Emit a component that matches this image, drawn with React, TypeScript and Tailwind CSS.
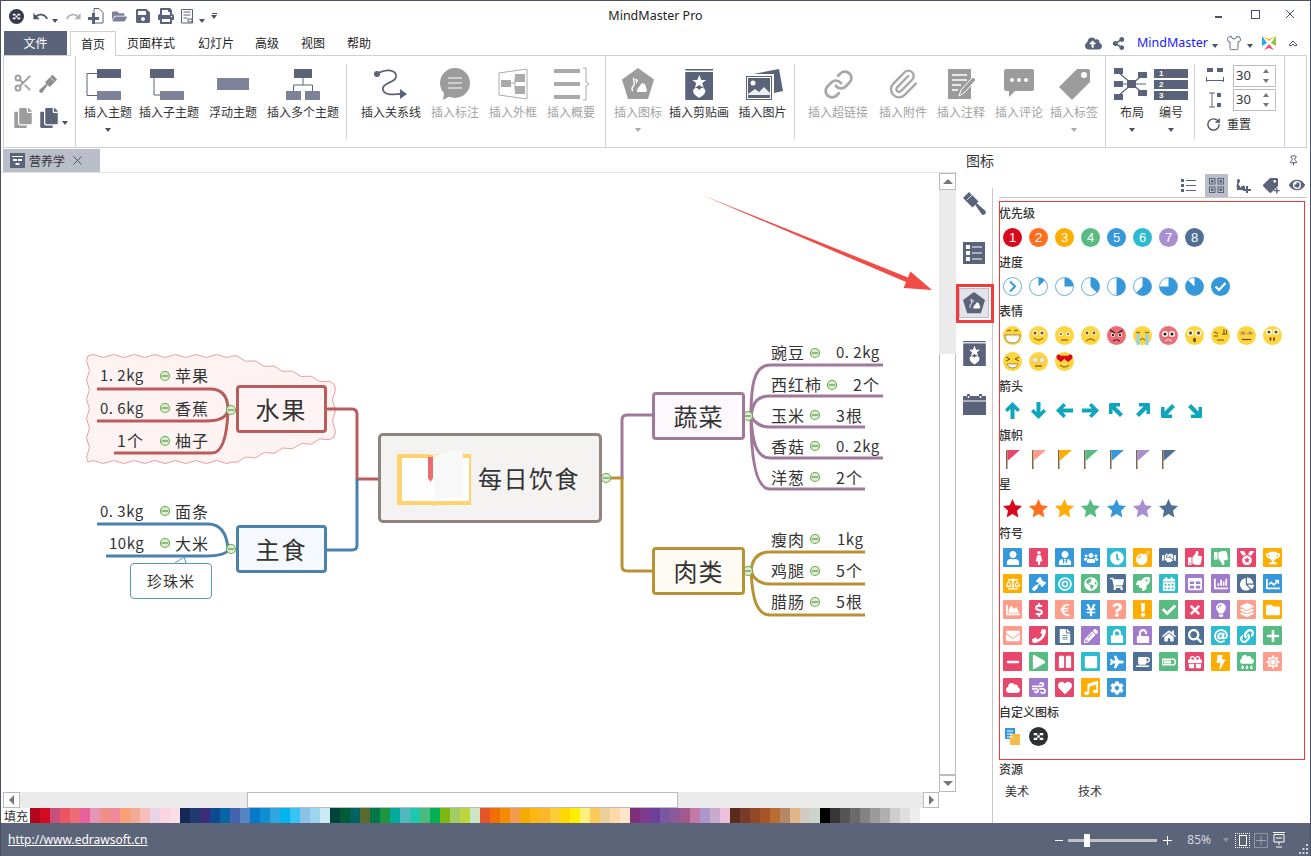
import type { ReactNode } from "react";
import { Link, Paperclip, Shirt, RotateCw, Pin, Scissors } from "lucide-react";
import { MdUndo, MdRedo } from "react-icons/md";
import {
  FaUser, FaFemale, FaUserTie, FaUsers, FaClock, FaBomb, FaHandshake, FaThumbsUp, FaThumbsDown, FaMedal, FaTrophy,
  FaBalanceScale, FaGavel, FaBullseye, FaGlobeAmericas, FaShoppingCart, FaRocket, FaCalendarAlt, FaTable, FaChartBar, FaChartPie, FaChartLine,
  FaChartArea, FaDollarSign, FaEuroSign, FaYenSign, FaQuestion, FaExclamation, FaCheck, FaTimes, FaLightbulb, FaLayerGroup, FaFolder,
  FaEnvelope, FaPhone, FaFileAlt, FaPencilAlt, FaLock, FaUnlock, FaHome, FaSearch, FaAt, FaLink, FaPlus,
  FaMinus, FaPlay, FaPause, FaStop, FaPlane, FaCoffee, FaBatteryThreeQuarters, FaGift, FaBolt, FaCloudRain, FaSun,
  FaCloud, FaWind, FaHeart, FaMusic, FaCog, FaCopy, FaSave, FaPrint, FaFolderOpen,
  FaCloudUploadAlt, FaShareAlt, FaEye, FaTag,
} from "react-icons/fa";

const DARK = "#5b637a";
const GRAY = "#9c9c9c";

const BLUE = "bg-[#3498db]", RED = "bg-[#e8466a]", TEAL = "bg-[#2cbbcf]", ORANGE = "bg-[#ffad00]";
const NAVY = "bg-[#4f7094]", GREEN = "bg-[#58bc82]", PURPLE = "bg-[#a07bcd]", SALMON = "bg-[#ff9d8a]";

const SYMBOLS: [any, string][] = [
  [FaUser, BLUE], [FaFemale, RED], [FaUserTie, BLUE], [FaUsers, BLUE], [FaClock, TEAL], [FaBomb, ORANGE], [FaHandshake, NAVY], [FaThumbsUp, RED], [FaThumbsDown, GREEN], [FaMedal, RED], [FaTrophy, ORANGE],
  [FaBalanceScale, ORANGE], [FaGavel, BLUE], [FaBullseye, TEAL], [FaGlobeAmericas, GREEN], [FaShoppingCart, NAVY], [FaRocket, GREEN], [FaCalendarAlt, TEAL], [FaTable, PURPLE], [FaChartBar, PURPLE], [FaChartPie, NAVY], [FaChartLine, BLUE],
  [FaChartArea, SALMON], [FaDollarSign, RED], [FaEuroSign, SALMON], [FaYenSign, BLUE], [FaQuestion, SALMON], [FaExclamation, ORANGE], [FaCheck, GREEN], [FaTimes, RED], [FaLightbulb, PURPLE], [FaLayerGroup, SALMON], [FaFolder, ORANGE],
  [FaEnvelope, SALMON], [FaPhone, RED], [FaFileAlt, NAVY], [FaPencilAlt, PURPLE], [FaLock, TEAL], [FaUnlock, PURPLE], [FaHome, NAVY], [FaSearch, NAVY], [FaAt, TEAL], [FaLink, TEAL], [FaPlus, GREEN],
  [FaMinus, RED], [FaPlay, GREEN], [FaPause, RED], [FaStop, TEAL], [FaPlane, BLUE], [FaCoffee, NAVY], [FaBatteryThreeQuarters, GREEN], [FaGift, RED], [FaBolt, ORANGE], [FaCloudRain, GREEN], [FaSun, SALMON],
  [FaCloud, RED], [FaWind, PURPLE], [FaHeart, RED], [FaMusic, ORANGE], [FaCog, BLUE],
];

const SWATCHES = [
  "bg-[#b0071a]", "bg-[#d40a20]", "bg-[#c6507a]", "bg-[#ea5565]", "bg-[#ee6c73]", "bg-[#e8619d]", "bg-[#e496b6]", "bg-[#f08f88]", "bg-[#f08a9a]", "bg-[#fb9f76]", "bg-[#f0ab95]", "bg-[#f7bdb8]", "bg-[#e8d4e6]", "bg-[#fbd3e3]", "bg-[#f9dfe5]",
  "bg-[#142858]", "bg-[#213a70]", "bg-[#3d2c7a]", "bg-[#0d4a8f]", "bg-[#0565a6]", "bg-[#4464ae]", "bg-[#5684c2]", "bg-[#0579cc]", "bg-[#0d8fd0]", "bg-[#2ea7e0]", "bg-[#00b4ef]", "bg-[#36c5f2]", "bg-[#8bc2e8]", "bg-[#9dd6ec]", "bg-[#cbe9f2]",
  "bg-[#00433a]", "bg-[#005c37]", "bg-[#00635f]", "bg-[#596a2e]", "bg-[#007749]", "bg-[#1e9540]", "bg-[#00ab9b]", "bg-[#50b9bd]", "bg-[#1ec8ae]", "bg-[#4bbb7d]", "bg-[#00b156]", "bg-[#7eb912]", "bg-[#a3cc62]", "bg-[#bdd63c]", "bg-[#cde5c6]",
  "bg-[#e4532a]", "bg-[#f06d00]", "bg-[#f58c00]", "bg-[#f49a4c]", "bg-[#f6ab00]", "bg-[#fdb714]", "bg-[#fdb62f]", "bg-[#fdcb33]", "bg-[#ffd800]", "bg-[#ffee00]", "bg-[#fdf07c]", "bg-[#fcc95b]", "bg-[#ecd09c]", "bg-[#fcd9a7]", "bg-[#fbe6c9]",
  "bg-[#7d2f7a]", "bg-[#7e3a8b]", "bg-[#6d3f98]", "bg-[#7b579f]", "bg-[#8a5a9d]", "bg-[#a25a8c]", "bg-[#c378a8]", "bg-[#ab97cc]", "bg-[#c9a9cc]", "bg-[#eac0dc]",
  "bg-[#5a2a1c]", "bg-[#7a3a2a]", "bg-[#924a26]", "bg-[#a85427]", "bg-[#b96d33]", "bg-[#b58668]", "bg-[#e0b788]", "bg-[#d2cbc4]", "bg-[#cbd5c9]",
  "bg-[#000000]", "bg-[#373737]", "bg-[#555555]", "bg-[#6a6a6a]", "bg-[#838383]", "bg-[#9b9b9b]", "bg-[#b0b0b0]", "bg-[#cdcdcd]", "bg-[#dedede]", "bg-[#ededed]",
];

const PRIORITY = ["#d9071e", "#ff6d1f", "#ffad00", "#58bc82", "#3498db", "#2cbbcf", "#a78fd0", "#4f7094"];
const MARK = ["#e8466a", "#ff9d8a", "#ffad00", "#58bc82", "#3498db", "#a78fd0", "#4f7094"];
const STAR = ["#d9071e", "#ff6d1f", "#ffad00", "#58bc82", "#3498db", "#a78fd0", "#4f7094"];

// leaves of the map, page coordinates
const LEAVES: [string, string][] = [
  ["left-[100px] top-[363px]", "1. 2kg"], ["left-[175px] top-[363px]", "苹果"],
  ["left-[100px] top-[396px]", "0. 6kg"], ["left-[175px] top-[396px]", "香蕉"],
  ["left-[117px] top-[428px]", "1个"], ["left-[175px] top-[428px]", "柚子"],
  ["left-[100px] top-[499px]", "0. 3kg"], ["left-[175px] top-[499px]", "面条"],
  ["left-[109px] top-[531px]", "10kg"], ["left-[175px] top-[531px]", "大米"],
  ["left-[771px] top-[340px]", "豌豆"], ["left-[836px] top-[340px]", "0. 2kg"],
  ["left-[771px] top-[372px]", "西红柿"], ["left-[853px] top-[372px]", "2个"],
  ["left-[771px] top-[403px]", "玉米"], ["left-[836px] top-[403px]", "3根"],
  ["left-[771px] top-[434px]", "香菇"], ["left-[836px] top-[434px]", "0. 2kg"],
  ["left-[771px] top-[465px]", "洋葱"], ["left-[836px] top-[465px]", "2个"],
  ["left-[771px] top-[527px]", "瘦肉"], ["left-[837px] top-[527px]", "1kg"],
  ["left-[771px] top-[558px]", "鸡腿"], ["left-[836px] top-[558px]", "5个"],
  ["left-[771px] top-[589px]", "腊肠"], ["left-[836px] top-[589px]", "5根"],
];

const DOTS: [number, number, number][] = [
  [165, 376, 4.5], [165, 408, 4.5], [165, 441, 4.5], [165, 511, 4.5], [165, 543, 4.5],
  [815, 353, 4.5], [832, 385, 4.5], [815, 415, 4.5], [815, 446, 4.5], [815, 477, 4.5],
  [815, 539, 4.5], [815, 571, 4.5], [815, 602, 4.5],
  [231, 410, 4.5], [231, 549, 4.5], [606, 478, 4.5], [748, 416, 4.5], [748, 571, 4.5],
];

function wavy(points: [number, number][]) {
  let d = "";
  points.forEach((p, i) => {
    const q = points[(i + 1) % points.length];
    const len = Math.hypot(q[0] - p[0], q[1] - p[1]);
    const n = Math.max(1, Math.round(len / 10));
    const nx = -(q[1] - p[1]) / len, ny = (q[0] - p[0]) / len;
    if (i === 0) d += `M${p[0]} ${p[1]}`;
    for (let k = 0; k < n; k++) {
      const ax = p[0] + ((q[0] - p[0]) * (k + 1)) / n, ay = p[1] + ((q[1] - p[1]) * (k + 1)) / n;
      const mx = p[0] + ((q[0] - p[0]) * (k + 0.5)) / n, my = p[1] + ((q[1] - p[1]) * (k + 0.5)) / n;
      const s = k % 2 ? 3 : -3;
      d += ` Q${mx + nx * s} ${my + ny * s} ${ax} ${ay}`;
    }
  });
  return d + " Z";
}

function Caret({ gray }: { gray?: boolean }) {
  return <span className={`inline-block w-0 h-0 border-x-[3px] border-x-transparent border-t-[4px] ${gray ? "border-t-[#a8a8a8]" : "border-t-[#4a5065]"}`} />;
}

function Pentagon({ color, size }: { color: string; size: number }) {
  return (
    <svg width={size} height={size} viewBox="0 0 32 32">
      <polygon points="16,0 32,11.5 26,31 6,31 0,11.5" fill={color} />
      <path d="M12 10c-2 2 2 4 0 7s-3 4-1 6M13 12c2-1 3 1 1 3" stroke="#fff" strokeWidth="1.4" fill="none" />
      <path d="M15 24c0-5 3-5 4-8 3-2 5 1 5 4 2 2 1 4-1 4z" fill="#fff" />
    </svg>
  );
}

function BookIcon({ size, color }: { size: number; color: string }) {
  return (
    <svg width={size * 0.92} height={size} viewBox="0 0 28 31">
      <rect x="0" y="0" width="28" height="1.5" fill={color} />
      <rect x="0" y="3" width="28" height="28" fill={color} />
      <polygon points="14,6 16,11 21,11 17,14 18.5,19 14,16 9.5,19 11,14 7,11 12,11" fill="#fff" />
      <path d="M14 29c-3-2-6-4-6-6.5a3 3 0 0 1 6-1 3 3 0 0 1 6 1c0 2.500-3 4.500-6 6.500z" fill="#fff" />
    </svg>
  );
}

// flat-headed brush, head top-left, handle bottom-right
function Brush({ size, color, flip }: { size: number; color: string; flip?: boolean }) {
  return (
    <svg className={flip ? "-scale-x-100" : ""} width={size} height={size} viewBox="0 0 24 24">
      <path d="M1 7L7 1l9.500 9.500-6 6z" fill={color} />
      <path d="M5 9l5-5M12 16l5-5" stroke="#fff" strokeWidth=".8" />
      <path d="M13 13.500l1.500-1.500 8.500 7.500a2.300 2.300 0 0 1-3.500 3.500z" fill={color} />
    </svg>
  );
}

function Btn({ w, label, gray, caret, children }: { w: string; label: string; gray?: boolean; caret?: boolean; children: ReactNode }) {
  return (
    <div className={`${w} flex flex-col items-center pt-[11px]`}>
      <div className="h-[34px] w-[48px] flex items-center justify-center shrink-0">{children}</div>
      <div className={`mt-[3px] h-[16px] leading-[16px] text-[12px] whitespace-nowrap ${gray ? "text-[#a3a3a3]" : "text-[#333]"}`}>{label}</div>
      {caret && <div className="mt-[7px] flex h-[6px] items-center"><Caret gray={gray} /></div>}
    </div>
  );
}

function TitleBar() {
  return (
    <div className="h-[30px] grid grid-cols-[1fr_auto_1fr] items-center shrink-0">
      <div className="flex items-center pl-[8px]">
        <svg width="15" height="15" viewBox="0 0 16 16"><circle cx="8" cy="8" r="8" fill="#35394a" /><path d="M4 5h3v2H4zM9 5h3v2H9zM7 7h2v2H7zM4 9h3v2H4zM9 9h3v2H9z" fill="#fff" /></svg>
        <MdUndo className="ml-[8px]" size={17} color="#4a5065" />
        <div className="ml-[3px]"><Caret /></div>
        <MdRedo className="ml-[7px]" size={17} color="#b4b4b4" />
        <svg className="ml-[6px]" width="16" height="16" viewBox="0 0 16 16"><path d="M6 .5h5l4 4V15H6z" fill="none" stroke={DARK} /><path d="M0 9h4V5h3v4h4v3H7v4H4v-4H0z" fill={DARK} /></svg>
        <FaFolderOpen className="ml-[8px]" size={15} color="#7d8299" />
        <FaSave className="ml-[8px]" size={16} color={DARK} />
        <FaPrint className="ml-[7px]" size={16} color={DARK} />
        <svg className="ml-[7px]" width="12" height="15" viewBox="0 0 12 15"><path d="M.5.500h11v13.500h-11z" fill="none" stroke={DARK} /><path d="M2.500 3h7M2.500 6h7M2.500 9h4M7 10h4v3H7z" stroke={DARK} fill="none" /></svg>
        <div className="ml-[6px]"><Caret /></div>
        <div className="ml-[6px] flex flex-col items-center gap-[1px]"><span className="w-[5px] h-px bg-[#4a5065]" /><Caret /></div>
      </div>
      <div className="text-[12.500px] text-[#222] font-['Noto_Sans',sans-serif]">MindMaster Pro</div>
      <div className="flex items-center justify-end pr-[15px] mb-[4px] text-[#4a5065]">
        <span className="w-[7px] h-[2px] bg-[#4a5065] mt-[6px]" />
        <span className="ml-[29px] w-[9px] h-[9px] border border-[#4a5065]" />
        <svg className="ml-[25px]" width="10" height="10" viewBox="0 0 10 10"><path d="M1 1l8 8M9 1l-8 8" stroke="#4a5065" strokeWidth="1" /></svg>
      </div>
    </div>
  );
}

function TabRow() {
  return (
    <div className="h-[24px] flex items-end pl-[3px] text-[12px] text-[#222] shrink-0 relative">
      <div className="w-[63px] h-[24px] bg-[#5b637a] text-white flex items-center justify-center">文件</div>
      <div className="ml-[3px] w-[46px] h-[25px] border border-b-0 border-[#d0d0d0] bg-white flex items-center justify-center -mb-px z-10">首页</div>
      <div className="ml-[11px] flex h-[24px] items-center gap-[23px]">
        <span>页面样式</span><span>幻灯片</span><span className="-ml-[2px]">高级</span><span className="-ml-px">视图</span><span className="-ml-px">帮助</span>
      </div>
      <div className="ml-auto pr-[12px] flex h-[24px] items-center">
        <FaCloudUploadAlt size={17} color={DARK} />
        <FaShareAlt className="ml-[10px]" size={13} color={DARK} />
        <span className="ml-[12px] text-[12.500px] text-[#1a1aff] font-['Noto_Sans',sans-serif]">MindMaster</span>
        <div className="ml-[4px]"><Caret /></div>
        <Shirt className="ml-[8px]" size={16} color={DARK} strokeWidth={1.4} />
        <div className="ml-[5px]"><Caret /></div>
        <svg className="ml-[8px]" width="16" height="16" viewBox="0 0 16 16"><path d="M1 1l5 7-5 3z" fill="#27a9e0" /><path d="M15 1l-5 7 5 3z" fill="#8cc63f" /><path d="M1 1l7 5 7-5-7 3z" fill="#f7b52c" /><path d="M3 15l5-6 5 6-5-2z" fill="#ee4f7f" /></svg>
        <svg className="ml-[11px]" width="10" height="8" viewBox="0 0 10 8"><path d="M1 6l4-4 4 4-2 1-2-2-2 2z" fill="none" stroke="#4a5065" /></svg>
      </div>
    </div>
  );
}

function Ribbon() {
  const line = "w-px self-stretch bg-[#d0d0d0] shrink-0";
  const short = "w-px h-[75px] mt-[8px] bg-[#d0d0d0] shrink-0";
  return (
    <div className="ml-[2px] mr-[3px] h-[93px] border border-[#d0d0d0] flex shrink-0 relative">
      <div className="w-[71px] shrink-0 flex flex-col pl-[9px] pt-[17px] gap-[13px]">
        <div className="flex items-center gap-[6px]">
          <Scissors size={20} color="#a0a0a0" strokeWidth={2.4} />
          <Brush size={19} color="#8e8e8e" flip />
        </div>
        <div className="flex items-center">
          <FaCopy size={20} color="#9c9c9c" />
          <FaCopy className="ml-[6px]" size={20} color={DARK} />
          <div className="ml-[3px]"><Caret /></div>
        </div>
      </div>
      <div className={line} />

      <div className="flex pl-[5px] shrink-0">
        <Btn w="w-[54px]" label="插入主题" caret>
          <svg width="48" height="34" viewBox="0 0 48 34"><path d="M13 6.500H3v22h10" fill="none" stroke={DARK} /><rect x="13" y="2" width="24" height="9" fill={DARK} /><rect x="13" y="24" width="24" height="9" fill="#7d8299" /></svg>
        </Btn>
        <Btn w="w-[68px]" label="插入子主题">
          <svg width="48" height="34" viewBox="0 0 48 34"><path d="M9 11v17h6" fill="none" stroke={DARK} /><rect x="5" y="2" width="24" height="9" fill={DARK} /><rect x="15" y="24" width="24" height="9" fill="#7d8299" /></svg>
        </Btn>
        <Btn w="w-[60px]" label="浮动主题">
          <svg width="48" height="34" viewBox="0 0 48 34"><rect x="8" y="11" width="32" height="12" fill="#7d8299" /></svg>
        </Btn>
        <Btn w="w-[80px]" label="插入多个主题">
          <svg width="48" height="34" viewBox="0 0 48 34"><path d="M24 11v7M14.500 24v-6h19v6" fill="none" stroke={DARK} /><rect x="15" y="2" width="18" height="9" fill={DARK} /><rect x="7" y="24" width="15" height="9" fill="#7d8299" /><rect x="26" y="24" width="15" height="9" fill="#7d8299" /></svg>
        </Btn>
      </div>
      <div className={`${short} ml-[3px]`} />

      <div className="flex pl-[10px] shrink-0">
        <Btn w="w-[68px]" label="插入关系线">
          <svg width="48" height="34" viewBox="0 0 48 34"><circle cx="10" cy="7" r="3" fill={DARK} /><path d="M10 7C20 1 30 3 29 10 28 16 14 16 16 23c2 6 12 4 18 4" fill="none" stroke={DARK} strokeWidth="1.800" /><path d="M33 22l7 5-7 5z" fill={DARK} /></svg>
        </Btn>
        <Btn w="w-[60px]" label="插入标注" gray>
          <svg width="48" height="34" viewBox="0 0 48 34"><circle cx="24" cy="16" r="15" fill={GRAY} /><path d="M13 26l-1 7 9-5z" fill={GRAY} /><path d="M17 11h14M17 16h14M17 21h14" stroke="#fff" strokeWidth="1" /></svg>
        </Btn>
        <Btn w="w-[56px]" label="插入外框" gray>
          <svg width="48" height="34" viewBox="0 0 48 34"><path d="M10 6l28-4v30l-28-4z" fill="none" stroke="#aaa" /><rect x="12" y="13" width="10" height="7" fill="#aaa" /><rect x="26" y="7" width="10" height="8" fill="#aaa" /><rect x="26" y="19" width="10" height="8" fill="#aaa" /><path d="M22 16h4M26 11v12" stroke="#aaa" /></svg>
        </Btn>
        <Btn w="w-[60px]" label="插入概要" gray>
          <svg width="48" height="34" viewBox="0 0 48 34"><rect x="7" y="2" width="26" height="4" fill="#aaa" /><rect x="7" y="15" width="26" height="4" fill="#aaa" /><rect x="7" y="28" width="26" height="4" fill="#aaa" /><path d="M36 1h3v14l3 2-3 2v14h-3" fill="none" stroke="#aaa" /></svg>
        </Btn>
      </div>
      <div className={`${line} ml-[4px]`} />

      <div className="flex pl-[3px] shrink-0">
        <Btn w="w-[58px]" label="插入图标" gray caret><Pentagon color={GRAY} size={32} /></Btn>
        <Btn w="w-[64px]" label="插入剪贴画"><BookIcon size={31} color={DARK} /></Btn>
        <Btn w="w-[63px]" label="插入图片">
          <svg width="48" height="34" viewBox="0 0 48 34"><path d="M14 7l26-5 4 22-9 2V7z" fill={DARK} /><rect x="7.500" y="9.500" width="25" height="23" fill="#fff" stroke={DARK} /><rect x="9" y="11" width="22" height="20" fill={DARK} /><circle cx="14" cy="16" r="2.500" fill="#fff" /><path d="M9 27l7-5 4 3 5-5 6 6v2H9z" fill="#fff" opacity="0.9" /></svg>
        </Btn>
      </div>
      <div className={short} />

      <div className="flex pl-[11px] shrink-0">
        <Btn w="w-[64px]" label="插入超链接" gray><Link size={31} color="#a8a8a8" strokeWidth={2.2} /></Btn>
        <Btn w="w-[66px]" label="插入附件" gray><Paperclip size={32} color="#a8a8a8" strokeWidth={1.8} /></Btn>
        <Btn w="w-[50px]" label="插入注释" gray>
          <svg width="34" height="34" viewBox="0 0 34 34"><rect x="4" y="2" width="23" height="30" fill={GRAY} /><path d="M8 8h15M8 13h15M8 18h9M8 23h6" stroke="#fff" strokeWidth="1.500" /><path d="M15 29l2-6 12-13 3 3-12 13z" fill={GRAY} stroke="#fff" /></svg>
        </Btn>
        <Btn w="w-[66px]" label="插入评论" gray>
          <svg width="34" height="34" viewBox="0 0 34 34"><path d="M4 2h26a2 2 0 0 1 2 2v18a2 2 0 0 1-2 2H13l-6 6v-6H4a2 2 0 0 1-2-2V4a2 2 0 0 1 2-2z" fill={GRAY} /><circle cx="10" cy="13" r="2" fill="#fff" /><circle cx="17" cy="13" r="2" fill="#fff" /><circle cx="24" cy="13" r="2" fill="#fff" /></svg>
        </Btn>
        <Btn w="w-[44px]" label="插入标签" gray caret>
          <svg width="34" height="34" viewBox="0 0 34 34"><path d="M20 2h11a2 2 0 0 1 2 2v11L15 33 2 20z" fill={GRAY} /><circle cx="27" cy="8" r="3" fill="#fff" /></svg>
        </Btn>
      </div>
      <div className={`${line} ml-[9px]`} />

      <div className="flex pl-[6px] shrink-0">
        <Btn w="w-[40px]" label="布局" caret>
          <svg width="36" height="32" viewBox="0 0 36 32"><path d="M4 4l28 24M4 28L32 4M4 16h28" stroke={DARK} strokeWidth="1.200" /><rect x="0" y="0" width="9" height="6" fill={DARK} /><rect x="0" y="13" width="9" height="6" fill={DARK} /><rect x="0" y="26" width="9" height="6" fill={DARK} /><rect x="13" y="12" width="9" height="8" fill={DARK} /><rect x="24" y="4" width="9" height="6" fill={DARK} /><rect x="24" y="22" width="9" height="6" fill={DARK} /></svg>
        </Btn>
        <Btn w="w-[38px]" label="编号" caret>
          <div className="w-[34px] flex flex-col gap-[2px] shrink-0">
            <div className="h-[9px] bg-[#5b637a] text-white text-[8px] leading-[9px] pl-[5px] font-bold font-['Liberation_Sans',sans-serif]">1</div>
            <div className="h-[9px] bg-[#5b637a] text-white text-[8px] leading-[9px] pl-[5px] font-bold font-['Liberation_Sans',sans-serif]">2</div>
            <div className="h-[9px] bg-[#5b637a] text-white text-[8px] leading-[9px] pl-[5px] font-bold font-['Liberation_Sans',sans-serif]">3</div>
          </div>
        </Btn>
      </div>
      <div className={`${short} ml-[4px]`} />

      <div className="w-[89px] shrink-0 pl-[11px] pt-[9px] flex flex-col text-[#333]">
        <div className="flex items-center h-[22px]">
          <svg width="18" height="16" viewBox="0 0 18 16"><rect x="1" y="0" width="6" height="4" fill={DARK} /><rect x="11" y="0" width="6" height="4" fill={DARK} /><path d="M.5 9v5M17.500 9v5M1 12.500h16" stroke={DARK} /></svg>
          <Spin />
        </div>
        <div className="flex items-center h-[22px] mt-[2px]">
          <svg width="18" height="16" viewBox="0 0 18 16"><path d="M3 1h6M3 15h6M6 1v14" stroke={DARK} fill="none" /><rect x="11" y="1" width="4" height="4" fill={DARK} /><rect x="11" y="11" width="4" height="4" fill={DARK} /></svg>
          <Spin />
        </div>
        <div className="flex items-center h-[18px] mt-[4px] text-[12px]">
          <RotateCw size={15} color="#4a5065" strokeWidth={2.2} />
          <span className="ml-[6px]">重置</span>
        </div>
      </div>
      <div className={line} />
    </div>
  );
}

function Spin() {
  return (
    <div className="ml-[9px] w-[43px] h-[22px] border border-[#bcbcbc] flex items-center pl-[2px] text-[13px] font-['Noto_Sans',sans-serif]">
      30
      <div className="ml-auto mr-[6px] flex flex-col gap-[6px]">
        <span className="w-0 h-0 border-x-[3px] border-x-transparent border-b-[4px] border-b-[#777]" />
        <span className="w-0 h-0 border-x-[3px] border-x-transparent border-t-[4px] border-t-[#777]" />
      </div>
    </div>
  );
}

function TabStrip() {
  return (
    <div className="h-[25px] flex shrink-0">
      <div className="w-[955px] pl-[2px] pt-px border-b border-[#e2e2e2]">
        <div className="w-[97px] h-[23px] bg-[#b9bec9] flex items-center text-[12px] text-[#333]">
          <svg className="ml-[7px]" width="15" height="15" viewBox="0 0 15 15"><path d="M0 0h15v15H0z" fill="#5b637a" /><path d="M2 3h11v1H2zM3 6h4v2H3zM8 6h4v2H8zM5.500 10h4v2h-4z" fill="#fff" /></svg>
          <span className="ml-[4px]">营养学</span>
          <svg className="ml-[8px]" width="9" height="9" viewBox="0 0 9 9"><path d="M.5.5l8 8M8.500.5l-8 8" stroke="#555" /></svg>
        </div>
      </div>
      <div className="flex-1 flex items-center pl-[10px] pr-[11px] text-[14px] text-[#333]">
        <span>图标</span>
        <Pin className="ml-auto" size={11} color="#4a5065" />
      </div>
    </div>
  );
}

function MapCanvas() {
  const cloud = wavy([[88, 356], [232, 356], [334, 384], [334, 437], [232, 462], [88, 462]]);
  return (
    <div className="w-[938px] relative overflow-hidden bg-white">
      <div className="absolute left-[-1px] top-[-173px] w-[1311px] h-[856px] font-['Noto_Sans_CJK_SC',sans-serif] text-[#333]">
        <svg className="absolute left-0 top-0" width="1311" height="856" fill="none">
          <path d={cloud} fill="#fef3f3" stroke="#ef9c9c" strokeWidth="1" />
          <g strokeWidth="3">
            <path d="M97 389H210Q228 389 228 410M97 421H206Q226 421 228 410M114 453H212Q226 453 228 412" stroke="#b85c5c" />
            <path d="M97 524H208Q226 524 228 549M106 556H205Q226 556 229 549" stroke="#4a82ad" />
            <path d="M380 479H357V414Q357 409 352 409H327" stroke="#b85c5c" />
            <path d="M357 479V545Q357 550 352 550H327" stroke="#4a82ad" />
            <path d="M622 479V420Q622 415 627 415H653" stroke="#a0789a" />
            <path d="M608 478H622V566Q622 571 627 571H653" stroke="#ba9236" />
            <path d="M751 416C751 385 754 365 770 365H883M751 416C753 402 757 396 770 396H883M751 416C753 420 757 427 770 427H865M751 416C752 440 756 458 770 458H883M751 416C751 450 754 489 770 489H865" stroke="#a0789a" />
            <path d="M751 571C752 560 757 552 770 552H865M751 571C753 577 757 584 770 584H865M751 571C752 590 754 615 770 615H865" stroke="#ba9236" />
          </g>
          <path d="M175 563L184 557L186 563" stroke="#5a97b8" fill="#fff" />
          {DOTS.map(([x, y, r]) => (
            <g key={`${x}-${y}`}>
              <circle cx={x} cy={y} r={r} fill="#dcecd4" stroke="#6ab04c" strokeWidth="1.200" />
              <path d={`M${x - 3} ${y}H${x + 3}`} stroke="#4f7f3a" strokeWidth="1" />
            </g>
          ))}
          <polygon points="702,195 908,277.400 910.400,271.400 932,290 903.600,288 906,282" fill="#f24a45" />
        </svg>

        {LEAVES.map(([pos, text]) => (
          <div key={pos} className={`absolute ${pos} h-[24px] leading-[24px] whitespace-nowrap ${text.includes("kg") ? "text-[15px] tracking-[0.5px]" : "text-[16px] tracking-[1px]"}`}>{text}</div>
        ))}

        <div className="absolute left-[378px] top-[433px] w-[224px] h-[90px] border-[3px] border-[#8f8480] rounded-[5px] bg-[#f5f2f2] flex items-center">
          <svg className="ml-[15px]" width="76" height="58" viewBox="0 0 76 58">
            <path d="M1 5h32c2 0 4 1 5 2 2-2 3-2 5-2h32v51H40l-2 1-2-1H1z" fill="#ffd470" />
            <rect x="6" y="9" width="67" height="43" fill="#fff" />
            <path d="M38 7c8-3 20-6 29-5v47c-9-2-21 0-29 4z" fill="#f8f8f8" />
            <path d="M32 8h5v21l-2.500 4-2.500-4z" fill="#ee6a72" />
          </svg>
          <span className="ml-[6px] text-[24px] tracking-[1.500px] leading-none">每日饮食</span>
        </div>

        <div className="absolute left-[236px] top-[385px] w-[91px] h-[48px] border-[3px] border-[#b85c5c] rounded-[4px] bg-[#fef4f4] flex items-center justify-center text-[24px] tracking-[2px]">水果</div>
        <div className="absolute left-[236px] top-[525px] w-[91px] h-[48px] border-[3px] border-[#4a82ad] rounded-[4px] bg-[#f5f9fd] flex items-center justify-center text-[24px] tracking-[2px]">主食</div>
        <div className="absolute left-[652px] top-[392px] w-[93px] h-[48px] border-[3px] border-[#a0789a] rounded-[4px] bg-[#fcf8fc] flex items-center justify-center text-[24px] tracking-[1px]">蔬菜</div>
        <div className="absolute left-[652px] top-[547px] w-[93px] h-[48px] border-[3px] border-[#ba9236] rounded-[4px] bg-[#fefbf5] flex items-center justify-center text-[24px] tracking-[1px]">肉类</div>
        <div className="absolute left-[130px] top-[563px] w-[82px] h-[36px] border border-[#5a97b8] rounded-[4px] bg-white flex items-center justify-center text-[15px] tracking-[1px]">珍珠米</div>
      </div>
    </div>
  );
}

function VScroll() {
  return (
    <div className="w-[17px] flex flex-col bg-[#ebebeb]">
      <div className="h-[17px] bg-white border border-[#bbb] flex items-center justify-center">
        <span className="w-0 h-0 border-x-[5px] border-x-transparent border-b-[5px] border-b-[#777]" />
      </div>
      <div className="h-[164px]" />
      <div className="flex-1 bg-white border-x border-b border-[#bbb]" />
      <div className="h-[17px] bg-white border border-[#bbb] flex items-center justify-center">
        <span className="w-0 h-0 border-x-[5px] border-x-transparent border-t-[5px] border-t-[#777]" />
      </div>
    </div>
  );
}

function HScroll() {
  return (
    <div className="ml-[2px] w-[936px] h-[16px] flex bg-[#ebebeb] shrink-0">
      <div className="w-[17px] bg-white border border-[#bbb] flex items-center justify-center">
        <span className="w-0 h-0 border-y-[5px] border-y-transparent border-r-[5px] border-r-[#777]" />
      </div>
      <div className="w-[227px]" />
      <div className="w-[431px] bg-white border border-[#bbb]" />
      <div className="flex-1" />
      <div className="w-[16px] bg-white border border-[#bbb] flex items-center justify-center">
        <span className="w-0 h-0 border-y-[5px] border-y-transparent border-l-[5px] border-l-[#777]" />
      </div>
    </div>
  );
}

function SideStrip() {
  return (
    <div className="w-[37px] shrink-0 flex flex-col">
      <div className="mt-[15px] flex-1 border-r border-[#c8c8c8] flex flex-col gap-[20px]">
        <div className="h-[30px] flex items-center justify-center"><Brush size={24} color={DARK} /></div>
        <div className="h-[30px] flex items-center justify-center">
          <svg width="22" height="22" viewBox="0 0 22 22"><rect width="22" height="22" fill={DARK} /><path d="M3 3h4v4H3zM3 9h4v4H3zM3 15h4v4H3z" fill="#fff" /><path d="M9 5h10M9 11h10M9 17h10" stroke="#fff" /></svg>
        </div>
        <div className="h-[30px] relative flex items-center justify-center">
          <div className="absolute left-0 top-[-4px] w-[38px] h-[39px] border-[3px] border-[#f53a3a] z-10" />
          <div className="w-[30px] h-[30px] bg-[#e2e4ea] border border-[#b9bec9] flex items-center justify-center"><Pentagon color={DARK} size={22} /></div>
        </div>
        <div className="h-[30px] flex items-center justify-center"><BookIcon size={25} color={DARK} /></div>
        <div className="h-[30px] flex items-center justify-center">
          <svg width="23" height="23" viewBox="0 0 23 23"><path d="M0 4h4V2h3v2h9V2h3v2h4v19H0z" fill={DARK} /><path d="M0 9h23" stroke="#fff" /><circle cx="5.500" cy="5" r="1" fill="#fff" /><circle cx="17.500" cy="5" r="1" fill="#fff" /></svg>
        </div>
      </div>
    </div>
  );
}

function Section({ title, children }: { title: string; children: ReactNode }) {
  return (
    <div className="mb-[5px]">
      <div className="h-[20px] leading-[20px] text-[12px] font-medium text-[#333] -ml-px">{title}</div>
      <div className="mt-[5px] pl-[3px] grid gap-[7px] grid-cols-[repeat(11,19px)]">{children}</div>
    </div>
  );
}

function Progress({ i }: { i: number }) {
  if (i === 0) return <svg width="19" height="19" viewBox="0 0 19 19"><circle cx="9.500" cy="9.500" r="9" fill="#fff" stroke="#6aaee0" /><path d="M7 4.500l5 5-5 5" fill="none" stroke="#3498db" strokeWidth="2" /></svg>;
  if (i === 8) return <svg width="19" height="19" viewBox="0 0 19 19"><circle cx="9.500" cy="9.500" r="9.500" fill="#3498db" /><path d="M4.500 9.500l3.500 3.500 6.500-7" fill="none" stroke="#fff" strokeWidth="2.200" /></svg>;
  const a = (i / 8) * Math.PI * 2;
  const x = 9.5 + 9 * Math.sin(a), y = 9.5 - 9 * Math.cos(a);
  return (
    <svg width="19" height="19" viewBox="0 0 19 19">
      <circle cx="9.500" cy="9.500" r="9" fill="#fff" stroke="#6aaee0" />
      <path d={`M9.500 9.500V.5A9 9 0 ${a > Math.PI ? 1 : 0} 1 ${x} ${y}Z`} fill="#3498db" />
    </svg>
  );
}

const Y = "#fcd53f";
const EYE = "#7a4a10";
const FACES: ReactNode[] = [
  <><path d="M4 5q2-2 4 0M11 5q2-2 4 0" stroke={EYE} fill="none" /><path d="M2 9h15q0 8-7.500 8T2 9z" fill="#fff" stroke={EYE} strokeWidth=".6" /></>,
  <><circle cx="6" cy="7" r="2.500" fill="#fff" /><circle cx="13" cy="7" r="2.500" fill="#fff" /><circle cx="6" cy="7" r="1.500" fill={EYE} /><circle cx="13" cy="7" r="1.500" fill={EYE} /><path d="M5 12q4.500 4 9 0" stroke={EYE} fill="none" /></>,
  <><circle cx="6" cy="8" r="2" fill="#fff" /><circle cx="13" cy="8" r="2" fill="#fff" /><circle cx="6" cy="8" r="1" fill={EYE} /><circle cx="13" cy="8" r="1" fill={EYE} /><path d="M6 14h7" stroke={EYE} /></>,
  <><circle cx="6" cy="7" r="2.200" fill="#fff" /><circle cx="13" cy="7" r="2.200" fill="#fff" /><circle cx="6" cy="7" r="1.400" fill={EYE} /><circle cx="13" cy="7" r="1.400" fill={EYE} /><path d="M5 15q4.500-4 9 0" stroke={EYE} fill="none" /></>,
  <><circle cx="6" cy="9" r="2" fill="#fff" /><circle cx="13" cy="9" r="2" fill="#fff" /><circle cx="6" cy="9" r="1.200" fill="#222" /><circle cx="13" cy="9" r="1.200" fill="#222" /><path d="M3 4l5 3M16 4l-5 3" stroke="#222" strokeWidth="1.200" /><path d="M6 15q3.500-3 7 0" stroke="#222" fill="none" /></>,
  <><path d="M3 6q2 2 4 0M12 6q2 2 4 0" stroke={EYE} fill="none" /><rect x="3.500" y="8" width="3" height="11" fill="#8fd3f0" /><rect x="12.500" y="8" width="3" height="11" fill="#8fd3f0" /><path d="M7 14q2.500-3 5 0" stroke={EYE} fill="none" /></>,
  <><circle cx="6" cy="8" r="3" fill="#fff" /><circle cx="13" cy="8" r="3" fill="#fff" /><circle cx="6" cy="8" r="1.600" fill="#222" /><circle cx="13" cy="8" r="1.600" fill="#222" /><path d="M6 15q3.500-3 7 0" stroke="#fff" fill="none" /><path d="M1 11l2 3-2 1z" fill="#5db7ea" /></>,
  <><circle cx="5.500" cy="7" r="3" fill="#fff" /><circle cx="13.500" cy="7" r="3" fill="#fff" /><circle cx="5.500" cy="7" r="1.700" fill={EYE} /><circle cx="13.500" cy="7" r="1.700" fill={EYE} /><ellipse cx="9.500" cy="14" rx="1.500" ry="2.200" fill={EYE} /></>,
  <><path d="M3 6l4 1.500M3 10h4M6 14h7" stroke={EYE} /><path d="M11 8h5M13 3v5M15.500 4v4" stroke={EYE} /></>,
  <><path d="M3.500 8a2.500 2 0 0 1 5 0zM10.500 8a2.500 2 0 0 1 5 0z" fill="#fff" stroke={EYE} strokeWidth=".5" /><path d="M5 7h2M12 7h2" stroke={EYE} /><path d="M5 13.500h9" stroke={EYE} strokeWidth="1.200" /></>,
  <><circle cx="6" cy="6" r="3" fill="#fff" /><circle cx="13" cy="6" r="3" fill="#fff" /><circle cx="6" cy="6" r="1.600" fill={EYE} /><circle cx="13" cy="6" r="1.600" fill={EYE} /><ellipse cx="7.500" cy="13" rx="1" ry="2" fill={EYE} /><ellipse cx="11" cy="13" rx="1" ry="2" fill={EYE} /></>,
  <><path d="M3 5l4 2-4 2M16 5l-4 2 4 2" stroke={EYE} fill="none" /><path d="M4 12h11q-1 4-5.500 4T4 12z" fill="#fff" stroke={EYE} strokeWidth=".6" /></>,
  <><circle cx="6" cy="8" r="3" fill="#efe6c8" stroke="#c9a64a" strokeWidth=".5" /><circle cx="13" cy="8" r="3" fill="#efe6c8" stroke="#c9a64a" strokeWidth=".5" /><path d="M6 14h7" stroke={EYE} strokeWidth="1.200" /></>,
  <><path d="M6 10C3 8 1.500 6.500 1.500 5a2.200 2.200 0 0 1 4.500-.5A2.200 2.200 0 0 1 10 5c0 1.500-1.500 3-4 5z" fill="#d9071e" /><path d="M13 10c-3-2-4-3.500-4-5a2.200 2.200 0 0 1 4-.5 2.200 2.200 0 0 1 4.500.5c0 1.500-1.500 3-4.500 5z" fill="#d9071e" /><path d="M5 13q4.500 4 9 0" stroke={EYE} fill="none" /></>,
];

const ARROWS = [
  "M9.500 1L17 8.500l-2.500 2.500-3-3V18h-4V8l-3 3L2 8.500z",
  "M9.500 18L17 10.500 14.500 8l-3 3V1h-4v10l-3-3L2 10.500z",
  "M1 9.500L8.500 2 11 4.500l-3 3h10v4H8l3 3L8.500 17z",
  "M18 9.500L10.500 2 8 4.500l3 3H1v4h10l-3 3 2.500 2.500z",
  "M3 2h10v3.500H8.500L16 13l-3 3-7.500-7.500V13H2V3z",
  "M16 2H6v3.500h4.500L3 13l3 3 7.500-7.500V13H17V3z",
  "M3 17h10v-3.500H8.500L16 6l-3-3-7.500 7.500V6H2v10z",
  "M16 17H6v-3.500h4.500L3 6l3-3 7.500 7.500V6H17v10z",
];

function IconPanel() {
  return (
    <div className="flex-1 flex flex-col min-w-0">
      <div className="h-[25px] ml-[6px] mr-[3px] flex items-center justify-end pr-[2px] shrink-0 border-b border-[#c8c8c8]">
        <svg width="15" height="13" viewBox="0 0 15 13"><path d="M0 0h3v3H0zM0 5h3v3H0zM0 10h3v3H0zM5 1h10v1H5zM5 6h10v1H5zM5 11h10v1H5z" fill={DARK} /></svg>
        <div className="ml-[9px] w-[23px] h-[23px] bg-[#b9bec9] flex items-center justify-center">
          <svg width="15" height="15" viewBox="0 0 15 15" fill="none" stroke={DARK}><rect x=".5" y=".5" width="5.500" height="5.500" /><rect x="9" y=".5" width="5.500" height="5.500" /><rect x=".5" y="9" width="5.500" height="5.500" /><rect x="9" y="9" width="5.500" height="5.500" /><rect x="2.500" y="2.500" width="1.500" height="1.500" fill={DARK} /><rect x="11" y="2.500" width="1.500" height="1.500" fill={DARK} /><rect x="2.500" y="11" width="1.500" height="1.500" fill={DARK} /><rect x="11" y="11" width="1.500" height="1.500" fill={DARK} /></svg>
        </div>
        <svg className="ml-[7px]" width="16" height="15" viewBox="0 0 16 15"><path d="M3 1c2 0 3 2 1 4s2 2 1 5c3-4 6-3 5 2H2c0-3-1-4 0-6S1 2 3 1z" fill={DARK} /><path d="M11 8h2v3h3v2h-3v2h-2v-2H8v-2h3z" fill={DARK} /></svg>
        <span className="ml-[12px] relative flex">
          <FaTag size={15} color={DARK} className="-scale-x-100" />
          <span className="absolute -right-[2px] -bottom-[1px] text-[11px] leading-[8px] font-bold text-[#5b637a]">+</span>
        </span>
        <FaEye className="ml-[11px]" size={16} color={DARK} />
      </div>

      <div className="ml-[6px] mr-[5px] mt-[3px] h-[559px] pt-px border border-[#f03a3a] shrink-0 overflow-hidden font-['Noto_Sans_CJK_SC',sans-serif]">
        <Section title="优先级">
          {PRIORITY.map((c, i) => (
            <svg key={c} width="19" height="19" viewBox="0 0 19 19">
              <circle cx="9.500" cy="9.500" r="9.500" fill={c} />
              <text x="9.500" y="14" textAnchor="middle" fontSize="13" fill="#fff" fontFamily="Liberation Sans, sans-serif">{i + 1}</text>
            </svg>
          ))}
        </Section>
        <Section title="进度">
          {[0, 1, 2, 3, 4, 5, 6, 7, 8].map((i) => <Progress key={i} i={i} />)}
        </Section>
        <Section title="表情">
          {FACES.map((f, i) => (
            <svg key={i} width="19" height="19" viewBox="0 0 19 19">
              <circle cx="9.500" cy="9.500" r="9.500" fill={i === 4 || i === 6 ? "#ee6c73" : Y} />
              {f}
            </svg>
          ))}
        </Section>
        <Section title="箭头">
          {ARROWS.map((d) => <svg key={d} width="19" height="19" viewBox="0 0 19 19"><path d={d} fill="#0ea5bd" /></svg>)}
        </Section>
        <Section title="旗帜">
          {MARK.map((c) => (
            <svg key={c} width="19" height="19" viewBox="0 0 19 19">
              <rect x="3" y="0" width="1.500" height="19" fill="#80654c" />
              <path d="M4.500 0H17L4.500 11z" fill={c} />
            </svg>
          ))}
        </Section>
        <Section title="星">
          {STAR.map((c) => (
            <svg key={c} width="19" height="19" viewBox="0 0 19 19">
              <polygon points="9.500,0 12.300,6.300 19,7 14,11.700 15.400,18.500 9.500,15 3.600,18.500 5,11.700 0,7 6.700,6.300" fill={c} />
            </svg>
          ))}
        </Section>
        <Section title="符号">
          {SYMBOLS.map(([Icon, bg], i) => (
            <div key={i} className={`w-[19px] h-[19px] rounded-[1px] ${bg} flex items-center justify-center`}>
              <Icon size={14} color="#fff" />
            </div>
          ))}
        </Section>
        <Section title="自定义图标">
          <svg width="19" height="19" viewBox="0 0 19 19"><rect x="2" y="1" width="10" height="11" fill="#3498db" /><rect x="7" y="7" width="10" height="11" fill="#f4bc4a" /><path d="M4 4h6M4 7h6M4 10h6" stroke="#fff" /></svg>
          <svg width="19" height="19" viewBox="0 0 16 16"><circle cx="8" cy="8" r="8" fill="#2e3134" /><path d="M4 5h3v2H4zM9 5h3v2H9zM7 7h2v2H7zM4 9h3v2H4zM9 9h3v2H9z" fill="#fff" /></svg>
        </Section>
      </div>

      <div className="ml-[6px] font-['Noto_Sans_CJK_SC',sans-serif] text-[12px] text-[#333]">
        <div className="h-[18px] leading-[18px] font-medium">资源</div>
        <div className="mt-[4px] flex pl-[6px]">
          <span className="w-[73px]">美术</span>
          <span>技术</span>
        </div>
      </div>
    </div>
  );
}

function StatusBar() {
  return (
    <div className="flex-1 bg-[#5b6479] flex items-center text-white text-[13px] relative">
      <span className="ml-[7px] underline font-['Noto_Sans',sans-serif] text-[12px]">http://www.edrawsoft.cn</span>
      <div className="ml-auto flex items-center pr-[25px] pt-px">
        <span className="w-[8px] h-px bg-white" />
        <div className="ml-[5px] w-[89px] h-[3px] bg-[#c2c2c2] relative">
          <span className="absolute left-[16px] top-[-5px] w-[6px] h-[13px] bg-white" />
        </div>
        <svg className="ml-[6px]" width="9" height="9" viewBox="0 0 9 9"><path d="M4.500 0v9M0 4.500h9" stroke="#fff" /></svg>
        <span className="ml-[15px] text-[12px] text-[#d5d8e0] font-['Noto_Sans',sans-serif]">85%</span>
        <span className="ml-[12px] w-0 h-0 border-x-[3px] border-x-transparent border-t-[4px] border-t-[#8f95a5]" />
        <span className="ml-[6px] w-[15px] h-[15px] border border-dotted border-white flex items-center justify-center"><span className="w-[8px] h-[11px] border border-white" /></span>
        <span className="ml-[4px] w-[14px] h-[15px] border border-[#8f95a5] flex items-center justify-center"><svg width="10" height="9" viewBox="0 0 10 9"><path d="M0 4.500h10M5 0v9" stroke="#9fa5b4" /></svg></span>
        <svg className="ml-[5px]" width="12" height="16" viewBox="0 0 12 16"><path d="M0 .5h12M1 2.500h10V10H1z" stroke="#fff" fill="none" /><path d="M3 6h6M6 10v3M3 15h6" stroke="#fff" /></svg>
      </div>
      <svg className="absolute right-[1px] bottom-[1px]" width="10" height="12" viewBox="0 0 10 12" fill="#cfd2da"><rect x="7" y="1" width="2" height="2" /><rect x="3.500" y="5" width="2" height="2" /><rect x="7" y="5" width="2" height="2" /><rect x="0" y="9" width="2" height="2" /><rect x="3.500" y="9" width="2" height="2" /><rect x="7" y="9" width="2" height="2" /></svg>
    </div>
  );
}

export default function App() {
  return (
    <div className="w-[1311px] h-[856px] flex flex-col bg-white border-x border-t border-[#4a5065] overflow-hidden font-['Noto_Sans_CJK_SC',sans-serif]">
      <TitleBar />
      <TabRow />
      <Ribbon />
      <TabStrip />
      <div className="h-[650px] flex shrink-0">
        <div className="w-[955px] flex flex-col shrink-0">
          <div className="h-[619px] flex shrink-0">
            <MapCanvas />
            <VScroll />
          </div>
          <HScroll />
          <div className="h-[15px] flex shrink-0">
            <div className="w-[29px] pl-[3px] text-[12px] leading-[15px] text-[#333] whitespace-nowrap">填充</div>
            {SWATCHES.map((c, i) => <div key={i} className={`w-[10px] h-full ${c}`} />)}
          </div>
        </div>
        <SideStrip />
        <IconPanel />
      </div>
      <StatusBar />
    </div>
  );
}
